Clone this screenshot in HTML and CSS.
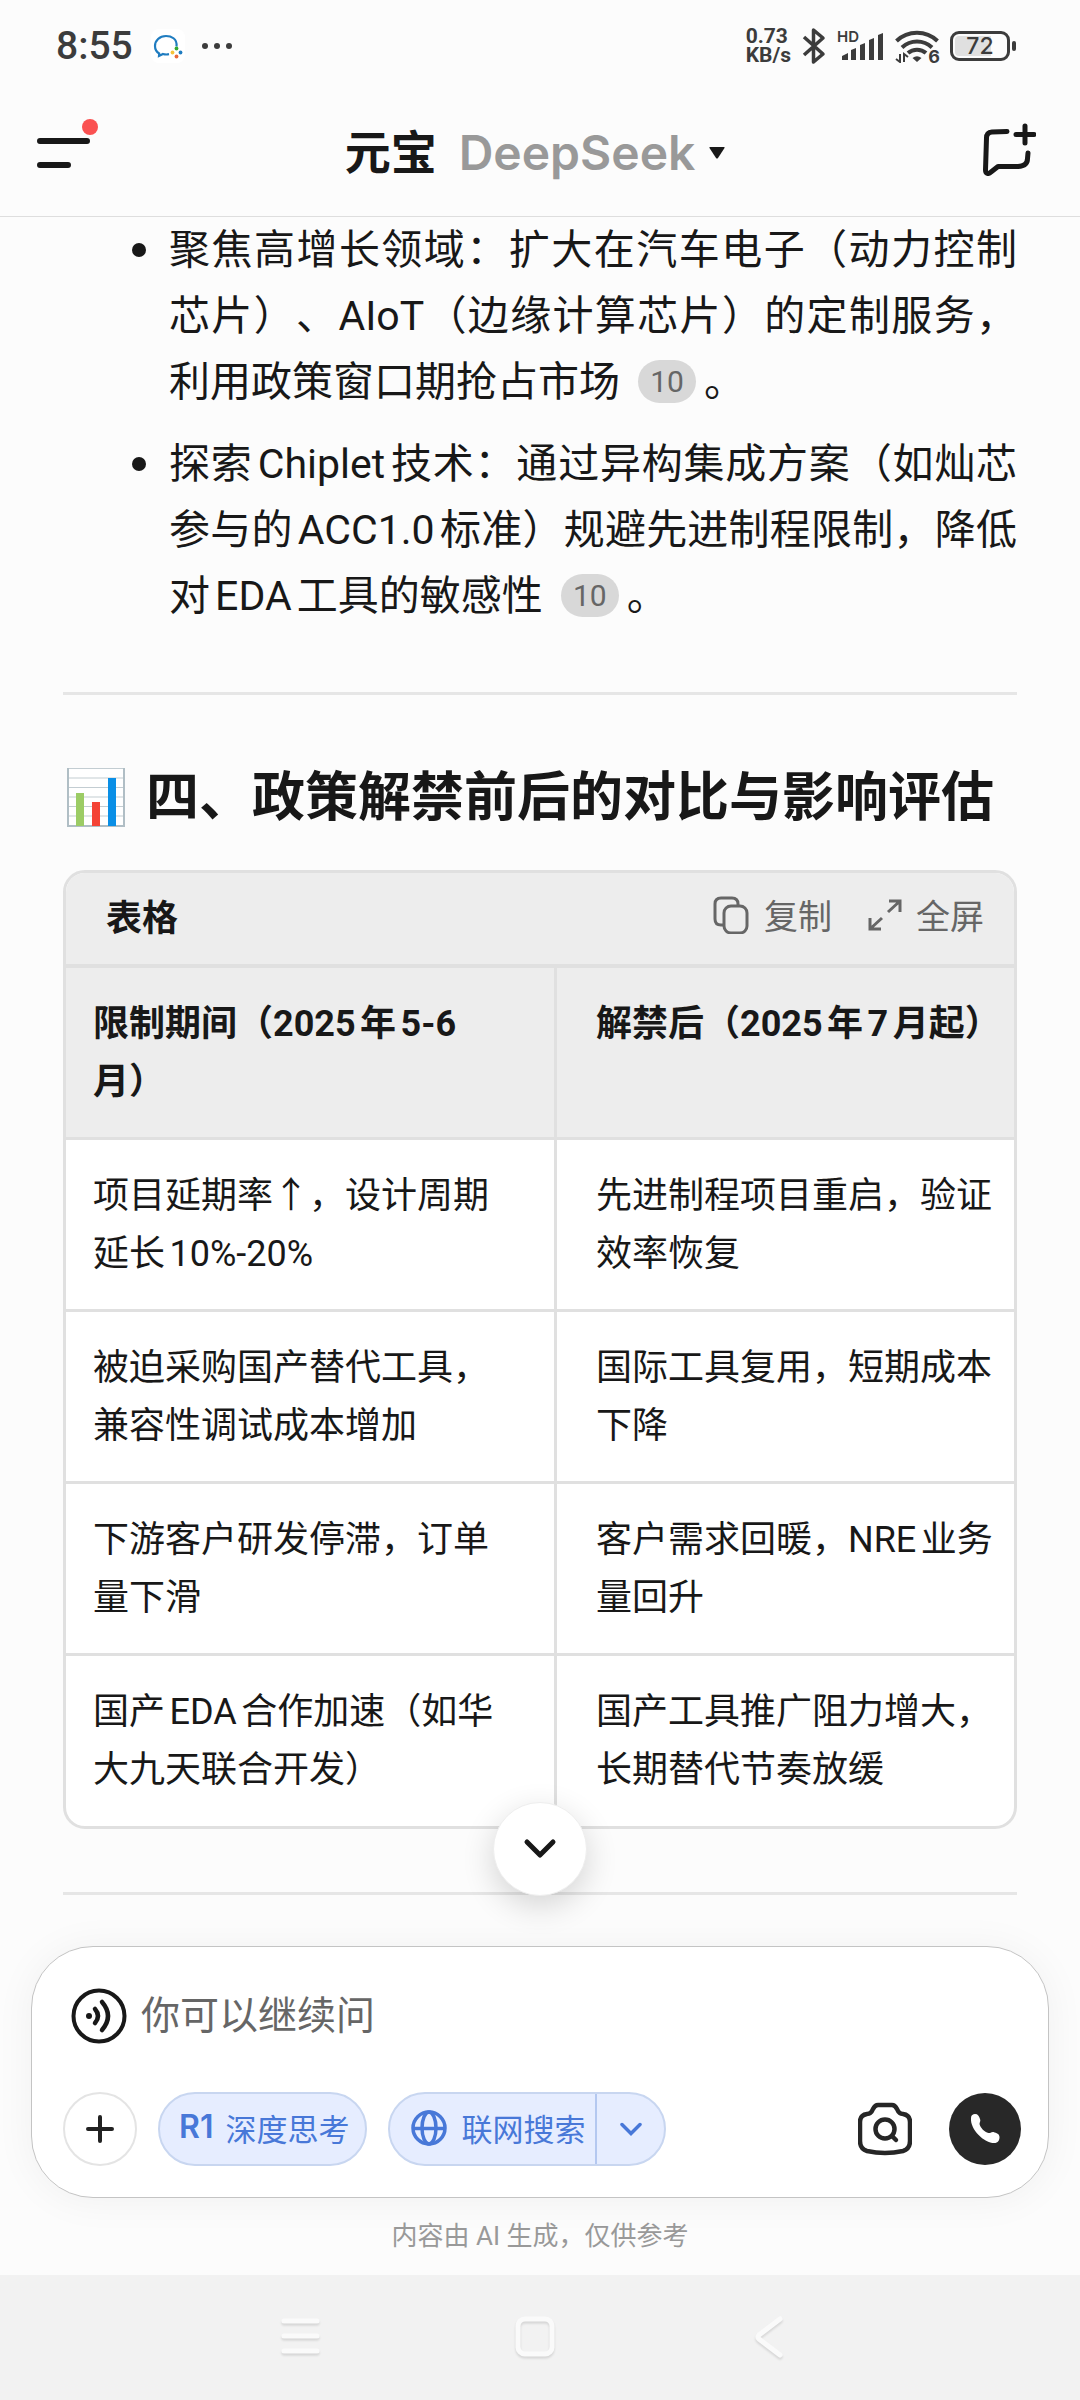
FILE: index.html
```html
<!DOCTYPE html>
<html lang="zh-CN">
<head>
<meta charset="utf-8">
<meta name="viewport" content="width=device-width">
<title>元宝 DeepSeek</title>
<link rel="stylesheet" href="styles.css">
</head>
<body>
<div class="status">
  <div class="status-side">
    <span class="clock">8:55</span>
    <svg class="app-badge" width="34" height="34" viewBox="0 0 34 34"><rect width="34" height="34" rx="8" fill="#fff"/><path d="M25.500 17.500C26.500 9.500 20 7 15 7 8.500 7 4 11.500 4 17c0 3.500 1.600 6 4.200 7.500L8 27l4-2c2 .6 4 .6 6 .2" fill="none" stroke="#1f7cc0" stroke-width="2.200"/><circle cx="25.500" cy="19.500" r="1.900" fill="#3a3"/><circle cx="29.500" cy="23.500" r="1.900" fill="#1f7cc0"/><circle cx="25.500" cy="27.500" r="1.900" fill="#e8683a"/><circle cx="21.500" cy="23.500" r="1.900" fill="#f5c33b"/></svg>
    <svg width="30" height="8" viewBox="0 0 30 8" fill="#3c3c3c"><circle cx="3" cy="4" r="3"/><circle cx="15" cy="4" r="3"/><circle cx="27" cy="4" r="3"/></svg>
  </div>
  <div class="status-side status-right">
    <span class="speed">0.73<br>KB/s</span>
    <svg width="24" height="38" viewBox="0 0 24 38" fill="none" stroke="#3c3c3c" stroke-width="3.500" stroke-linejoin="round"><path d="M2 10 21 27 11.500 35V3L21 11 2 28"/></svg>
    <span class="signal"><span class="hd">HD</span>
      <svg width="42" height="27" viewBox="0 0 42 27" fill="#3c3c3c"><path d="M0 27v-4l6-3v7zM9 27V17l5-2v12zM18 27V12l5-2v17zM27 27V7l5-2v22zM36 27V2l5-2v27z"/></svg></span>
    <span class="wifi"><svg width="44" height="34" viewBox="0 0 44 34" fill="none" stroke="#3c3c3c" stroke-width="4"><path d="M1.500 12C13 1 31 1 42.500 12M7 18.500c8.500-8 21.500-8 30 0M13 24c5-4.500 13-4.500 18 0"/><path d="M17.500 29q4.500-3.500 9 0L22 33z" fill="#3c3c3c" stroke="none"/><path d="M1 30l4 3V25M9 33v-8l4 3" stroke-width="2"/></svg><span class="gen">6</span></span>
    <span class="battery"><span class="cell">72</span></span>
  </div>
</div>
<header class="top">
  <button class="plain menu" aria-label="菜单"><svg width="62" height="56" viewBox="0 0 62 56"><path d="M3 27h47M3 51h28" stroke="#181818" stroke-width="6" stroke-linecap="round"/><circle cx="53" cy="13" r="8" fill="#fa5151"/></svg></button>
  <button class="plain title"><span>元宝</span><span class="model">DeepSeek</span><svg width="16" height="12" viewBox="0 0 16 12"><path d="M1 0h14q1 0 .5 1L9 11q-1 1-2 0L.5 1Q0 0 1 0z" fill="#181818"/></svg></button>
  <button class="plain new" aria-label="新对话"><svg width="54" height="54" viewBox="0 0 54 54" fill="none" stroke="#181818" stroke-width="5" stroke-linecap="round" stroke-linejoin="round"><path d="M25 9.500 10 10Q4.500 10.500 4.500 16L3.500 48c0 4 3 4.500 5.500 2L16 44.500h20q9.500-.500 9.500-8L46 31M43 4v17M34 12.500h18"/></svg></button>
</header>
<main class="chat">
  <ul class="points">
    <li>聚焦高增长领域：扩大在汽车电子（动力控制芯片）、AIoT（边缘计算芯片）的定制服务，利用政策窗口期抢占市场<a class="cite" href="#ref10">10</a>。</li>
    <li>探索Chiplet技术：通过异构集成方案（如灿芯参与的ACC1.0标准）规避先进制程限制，降低对EDA工具的敏感性<a class="cite" href="#ref10">10</a>。</li>
  </ul>
  <hr>
  <h2><svg width="60" height="62" viewBox="0 0 60 62"><path d="M1 1h57v58H1z" fill="#fff"/><path d="M1 1.500h57M1 11h57M1 20.500h57M1 30h57M1 39.500h57M1 49h57" stroke="#c3cdd2" stroke-width="1.200"/><path d="M2 1v58h56V1" fill="none" stroke="#b0bec5" stroke-width="2"/><path d="M10 26h8v33h-8z" fill="#9ccc65"/><path d="M26 35h8v24h-8z" fill="#f44336"/><path d="M42 11h8v48h-8z" fill="#0a8fe6"/></svg><span>四、政策解禁前后的对比与影响评估</span></h2>
  <section class="card">
    <div class="toolbar">
      <strong>表格</strong>
      <button class="plain"><svg width="38" height="38" viewBox="0 0 38 38" fill="none" stroke="#666" stroke-width="3"><rect x="12" y="10" width="23" height="27" rx="7"/><path d="M12 29H9q-6 0-6-6V8q0-6 6-6h11q6 0 6 6v2"/></svg>复制</button>
      <button class="plain"><svg width="34" height="34" viewBox="0 0 34 34" fill="none" stroke="#666" stroke-width="3"><path d="M21 3h11v11M32 3 20 14M13 31H2V20M2 31 14 20"/></svg>全屏</button>
    </div>
    <table>
      <thead><tr><th>限制期间（2025年5-6月）</th><th>解禁后（2025年7月起）</th></tr></thead>
      <tbody>
        <tr><td>项目延期率↑，设计周期延长10%-20%</td><td>先进制程项目重启，验证效率恢复</td></tr>
        <tr><td>被迫采购国产替代工具，兼容性调试成本增加</td><td>国际工具复用，短期成本下降</td></tr>
        <tr><td>下游客户研发停滞，订单量下滑</td><td>客户需求回暖，NRE业务量回升</td></tr>
        <tr><td>国产EDA合作加速（如华大九天联合开发）</td><td>国产工具推广阻力增大，长期替代节奏放缓</td></tr>
      </tbody>
    </table>
  </section>
  <hr>
  <button class="jump" aria-label="回到底部"><svg width="34" height="22" viewBox="0 0 34 22"><path d="m4 4 13 13L30 4" fill="none" stroke="#181818" stroke-width="5" stroke-linecap="round" stroke-linejoin="round"/></svg></button>
</main>
<form class="composer">
  <div class="ask">
    <button type="button" class="plain" aria-label="语音"><svg width="56" height="56" viewBox="0 0 56 56" fill="none" stroke="#181818" stroke-width="4"><circle cx="28" cy="28" r="25.500"/><circle cx="18" cy="28" r="3" fill="#181818" stroke="none"/><path d="M24 21q6 7 0 14M31 14q12 14 0 28" stroke-linecap="round" stroke-width="4.500"/></svg></button>
    <input type="text" placeholder="你可以继续问" aria-label="你可以继续问">
  </div>
  <div class="tools">
    <button type="button" class="plus" aria-label="添加"><svg width="28" height="28" viewBox="0 0 28 28"><path d="M14 2v24M2 14h24" stroke="#222" stroke-width="4" stroke-linecap="round"/></svg></button>
    <button type="button" class="pill think"><b class="r1">R1</b>深度思考</button>
    <div class="pill split">
      <button type="button" class="plain search"><svg width="36" height="36" viewBox="0 0 36 36" fill="none" stroke="#4878d8" stroke-width="3.500"><circle cx="18" cy="18" r="16"/><ellipse cx="18" cy="18" rx="7" ry="16"/><path d="M2 18.500h32"/></svg>联网搜索</button>
      <button type="button" class="plain more" aria-label="更多"><svg width="22" height="14" viewBox="0 0 22 14"><path d="m2 2.500 9 9 9-9" fill="none" stroke="#4878d8" stroke-width="3.500" stroke-linecap="round"/></svg></button>
    </div>
    <button type="button" class="plain camera" aria-label="拍照搜索"><svg width="54" height="54" viewBox="0 0 54 54" fill="none" stroke="#262626" stroke-width="4.500" stroke-linecap="round" stroke-linejoin="round"><path d="M20 3h14q3 0 5 4 2 5 6 5 7 1 7 8v19q0 8-7 10-18 4-36 0-7-2-7-10V20q0-7 7-8 4 0 6-5 2-4 5-4z"/><circle cx="27" cy="27" r="9.500"/><path d="m34 34 4 4"/></svg></button>
    <button type="button" class="call" aria-label="通话"><svg width="32" height="32" viewBox="0 0 32 32"><path d="M2 5C2 2 4 1 6 1c3 0 4 2 5 5 1 2-.500 3-.500 5 1 4 5 8 9 9 2 .500 3-1.500 5-1 3 1 6 2 6 5 0 2-.500 5-4 6C16 31 1 17 2 5z" fill="#fff"/></svg></button>
  </div>
</form>
<p class="note">内容由 AI 生成，仅供参考</p>
<nav class="system">
  <button class="plain" aria-label="最近任务"><svg width="42" height="46" viewBox="0 0 42 46"><path d="M4 6h33M4 21h33M4 36h33" stroke-linecap="round"/></svg></button>
  <button class="plain" aria-label="主屏幕"><svg width="42" height="46" viewBox="0 0 42 46"><rect x="4" y="4" width="34" height="35" rx="7"/></svg></button>
  <button class="plain" aria-label="返回"><svg width="42" height="46" viewBox="0 0 42 46"><path d="M32 4 11 20q-2 2 0 4l21 16" stroke-linecap="round"/></svg></button>
</nav>
</body>
</html>
```
FILE: styles.css
```css
* { box-sizing: border-box; }
body {
  margin: 0;
  min-height: 100vh;
  display: flex;
  flex-direction: column;
  background: #fcfcfc;
  color: #181818;
  font-family: Roboto, "Noto Sans CJK SC", sans-serif;
  text-spacing-trim: space-all;
  text-autospace: normal;
}
button, input { font: inherit; color: inherit; }
button { cursor: pointer; }
svg { display: block; flex: none; }
.plain {
  display: flex;
  align-items: center;
  padding: 0;
  border: 0;
  background: none;
}

/* status bar */
.status {
  display: flex;
  justify-content: space-between;
  height: 92px;
  padding: 0 70px 0 56px;
  color: #3c3c3c;
}
.status-side { display: flex; align-items: center; }
.clock { font-size: 39px; font-weight: 500; }
.app-badge { margin: 0 17px 0 18px; }
.status-right { gap: 11px; }
.speed { font-size: 21px; font-weight: 700; line-height: 19px; }
.signal { position: relative; padding-left: 5px; }
.hd { position: absolute; left: 0; top: -4px; font: 600 15px/15px Inter, sans-serif; }
.wifi { position: relative; }
.gen { position: absolute; right: -1px; bottom: -1px; background: #fcfcfc; font: 700 18px/15px Inter, sans-serif; }
.battery {
  position: relative;
  width: 60px;
  height: 30px;
  padding: 2px;
  border: 3px solid #3c3c3c;
  border-radius: 9px;
}
.battery::after {
  content: "";
  position: absolute;
  right: -9px;
  top: 7px;
  width: 4px;
  height: 10px;
  border-radius: 2px;
  background: #3c3c3c;
}
.cell {
  display: block;
  border-radius: 4px;
  background: linear-gradient(90deg, #e0e0e0 72%, transparent 72%);
  font: 500 23px/20px Inter, sans-serif;
  text-align: center;
}

/* title bar */
.top {
  display: grid;
  grid-template-columns: 1fr auto 1fr;
  align-items: center;
  height: 125px;
  padding: 0 44px 2px 34px;
  border-bottom: 1px solid #dedede;
}
.menu { padding: 0 0 22px 3px; }
.title { font-size: 46px; font-weight: 700; line-height: 64px; }
.model { margin: 0 14px 0 22px; font: 600 48px/64px Inter, sans-serif; color: #999; }
.new { justify-self: end; padding-bottom: 8px; }

/* answer */
.chat { position: relative; padding: 0 63px 51px; }
.points {
  margin: 0 0 63px 106px;
  padding: 0;
  list-style: none;
  font-size: 41px;
  line-height: 66px;
  text-align: justify;
}
.points li { position: relative; }
.points li + li { margin-top: 16px; }
.points li::before {
  content: "";
  position: absolute;
  left: -37px;
  top: 26px;
  width: 14px;
  height: 14px;
  border-radius: 50%;
  background: #181818;
}
.cite {
  display: inline-block;
  width: 58px;
  margin: 0 8px 0 18px;
  border-radius: 22px;
  background: #d8d8d8;
  color: #666;
  font-size: 30px;
  line-height: 43px;
  text-align: center;
  text-decoration: none;
  vertical-align: 4px;
}
hr { height: 3px; margin: 0; border: 0; background: #e6e6e6; }
h2 {
  display: flex;
  align-items: center;
  gap: 20px;
  margin: 66px 0 35px;
  padding-left: 3px;
  font-size: 53px;
  font-weight: 700;
  line-height: 74px;
  white-space: nowrap;
}
.card {
  margin-bottom: 63px;
  border: 3px solid #e0e0e0;
  border-radius: 22px;
  overflow: hidden;
  background: #fff;
}
.toolbar {
  display: flex;
  align-items: center;
  gap: 36px;
  height: 95px;
  padding: 0 30px 8px 40px;
  border-bottom: 4px solid #e0e0e0;
  background: #ededed;
  font-size: 36px;
}
.toolbar strong { flex: 1; }
.toolbar button { gap: 14px; color: #666; font-size: 34px; }
table { width: 100%; border-spacing: 0; table-layout: fixed; font-size: 36px; line-height: 58px; }
th, td { height: 172px; padding: 27px 9px 26px 39px; border-bottom: 3px solid #e0e0e0; text-align: left; vertical-align: top; }
th:first-child, td:first-child { width: 491px; padding-left: 27px; padding-right: 46px; border-right: 3px solid #e0e0e0; }
th { background: #ededed; font-weight: 700; }
tbody tr:last-child td { height: 170px; border-bottom: 0; }
.jump {
  position: absolute;
  left: 50%;
  bottom: 50px;
  display: grid;
  place-items: center;
  width: 94px;
  height: 94px;
  margin-left: -47px;
  border: 1px solid #eee;
  border-radius: 50%;
  background: #fff;
  box-shadow: 0 10px 32px rgba(0, 0, 0, .16);
}

/* composer */
.composer {
  position: relative;
  display: flex;
  flex-direction: column;
  gap: 48px;
  margin: 0 31px;
  padding: 41px 27px 31px 31px;
  border: 1px solid #c4c4c4;
  border-radius: 62px;
  background: #fff;
  box-shadow: 0 2px 40px rgba(0, 0, 0, .05);
}
.ask { display: flex; align-items: center; gap: 14px; padding-left: 8px; }
.ask input { flex: 1; min-width: 0; height: 56px; padding: 0; border: 0; outline: 0; background: none; font-size: 39px; }
.ask input::placeholder { color: #666; opacity: 1; }
.tools { display: flex; align-items: center; font-size: 31px; }
.plus { display: grid; place-items: center; width: 74px; height: 74px; margin-right: 21px; padding: 0; border: 2px solid #e4e4e4; border-radius: 50%; background: #fff; }
.pill {
  display: flex;
  align-items: center;
  height: 74px;
  margin-right: 21px;
  border: 2px solid #c8d6f0;
  border-radius: 38px;
  background: #e6edff;
  color: #4878d8;
}
.think { padding: 0 16px 4px 19px; }
.r1 { margin-right: 12px; font: 600 32px/36px Inter, sans-serif; }
.split button { height: 70px; }
.search { gap: 14px; padding: 0 10px 3px 21px; }
.more { width: 69px; justify-content: center; border-left: 2px solid #b4c8f0; }
.camera { margin: 0 37px 0 auto; }
.call { display: grid; place-items: center; width: 72px; height: 72px; padding: 0; border: 0; border-radius: 50%; background: #282828; }
.note { margin: 19px 0 20px; color: #999; font-size: 26px; line-height: 38px; text-align: center; }

/* system navigation */
.system {
  flex: 1;
  display: flex;
  align-items: center;
  justify-content: center;
  gap: 192px;
  min-height: 124px;
  padding: 0 10px 0 0;
  background: #f2f2f2;
}
.system svg { fill: none; stroke: #fafafa; stroke-width: 5; filter: drop-shadow(0 2px 1px rgba(0, 0, 0, .12)); }
```
